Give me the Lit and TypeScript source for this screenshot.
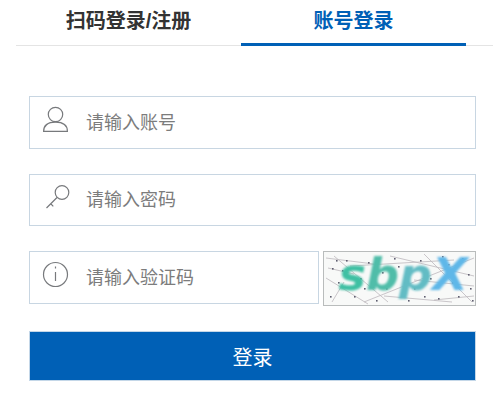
import { LitElement, html, css, svg } from "lit";
import { customElement } from "lit/decorators.js";

const noiseLines = [
  [2, 6, 50, 12], [10, 4, 64, 50], [20, 30, 8, 50], [40, 50, 150, 6], [66, 4, 150, 24], [2, 26, 44, 52],
  [100, 2, 148, 50], [60, 44, 128, 50], [26, 14, 130, 8], [90, 28, 150, 34], [110, 48, 150, 44], [4, 16, 30, 22],
];
const dots = [
  [8, 16], [14, 30], [22, 8], [30, 44], [44, 10], [52, 48], [62, 36], [74, 14], [84, 48], [96, 8],
  [106, 26], [114, 46], [124, 12], [134, 44], [144, 22], [148, 48], [58, 20], [36, 26], [90, 36], [128, 30],
  [6, 44], [18, 18], [70, 6], [118, 4], [138, 6], [146, 36], [100, 44], [78, 42], [12, 8], [40, 36],
];

@customElement("app-root")
export class AppRoot extends LitElement {
  static styles = css`
    :host {
      display: block;
      width: 493px;
      height: 401px;
      background: #fff;
      font-family: "Liberation Sans", "Noto Sans CJK SC", sans-serif;
      overflow: hidden;
    }
    .tabs {
      display: flex;
      margin-left: 16px;
      height: 46px;
      box-sizing: border-box;
      border-bottom: 1px solid #e4e4e4;
    }
    .tab {
      width: 225px;
      height: 46px;
      box-sizing: border-box;
      text-align: center;
      font-size: 20px;
      font-weight: 700;
      line-height: 42px;
      color: #333;
    }
    .tab.active {
      color: #0060b6;
      border-bottom: 3px solid #0060b6;
    }
    form {
      display: flex;
      flex-direction: column;
      margin: 50px 17px 0 29px;
    }
    .field {
      display: flex;
      align-items: center;
      box-sizing: border-box;
      height: 53px;
      border: 1px solid #c8d6e2;
    }
    .field svg {
      flex: none;
      width: 28px;
      height: 28px;
      margin: 0 0 7px 12px;
      fill: none;
      stroke: #77797c;
      stroke-width: 1.2;
    }
    .ph {
      margin: 0 0 4px 16px;
      font-size: 18px;
      color: #7c7c7c;
    }
    .second {
      height: 52px;
      margin-top: 25px;
    }
    .row {
      display: flex;
      align-items: flex-start;
      gap: 4px;
      margin-top: 25px;
    }
    .row .field {
      width: 290px;
    }
    .captcha {
      position: relative;
      box-sizing: border-box;
      width: 153px;
      height: 55px;
      border: 1px solid #b9bcbc;
      background: #f8f9f8;
    }
    .captcha svg {
      position: absolute;
      inset: 0;
      width: 100%;
      height: 100%;
      filter: blur(0.5px);
    }
    .code {
      position: relative;
      display: flex;
      justify-content: center;
      padding-left: 7px;
      font-family: "DejaVu Sans", sans-serif;
      font-size: 44px;
      line-height: 50px;
      font-weight: 700;
      font-style: italic;
      filter: blur(0.8px);
      transform: translateY(-2px) scale(1.05, 1);
    }
    .s { color: #3fc0a3; }
    .b { color: #50bda9; }
    .p { color: #62bcc4; }
    .x { color: #5fb7e8; }
    button {
      height: 50px;
      margin-top: 25px;
      border: 1px solid #c4d7e8;
      background: #0060b6;
      color: #fff;
      font: inherit;
      font-size: 20px;
      padding: 0;
    }
  `;

  render() {
    return html`
      <div class="tabs">
        <div class="tab">扫码登录/注册</div>
        <div class="tab active">账号登录</div>
      </div>
      <form>
        <div class="field">
          <svg viewBox="0 0 28 28">
            <circle cx="13.5" cy="9.5" r="7.2" />
            <path d="M1.6 26.4c0-5.6 4-9.2 11.9-9.2s11.9 3.6 11.9 9.2z" />
          </svg>
          <span class="ph">请输入账号</span>
        </div>
        <div class="field second">
          <svg viewBox="0 0 28 28">
            <circle cx="20" cy="9.5" r="6.8" />
            <path d="M15 14.5 4.5 25M8.5 20.5l2.8 2.8" />
          </svg>
          <span class="ph">请输入密码</span>
        </div>
        <div class="row">
          <div class="field">
            <svg viewBox="0 0 28 28">
              <circle cx="13.5" cy="14.5" r="12" />
              <path d="M13.5 12v9M13.5 6.5v2" />
            </svg>
            <span class="ph">请输入验证码</span>
          </div>
          <div class="captcha">
            <svg viewBox="0 0 151 53">
              ${noiseLines.map(
                ([a, b, c, d]) =>
                  svg`<line x1=${a} y1=${b} x2=${c} y2=${d} stroke="#bdb7bd" stroke-width="0.8" />`,
              )}
              ${dots.map(([a, b]) => svg`<rect x=${a} y=${b} width="1.6" height="1.6" fill="#5f5e70" />`)}
            </svg>
            <div class="code">
              <span class="s">s</span><span class="b">b</span><span class="p">p</span><span class="x">X</span>
            </div>
          </div>
        </div>
        <button type="button">登录</button>
      </form>
    `;
  }
}
